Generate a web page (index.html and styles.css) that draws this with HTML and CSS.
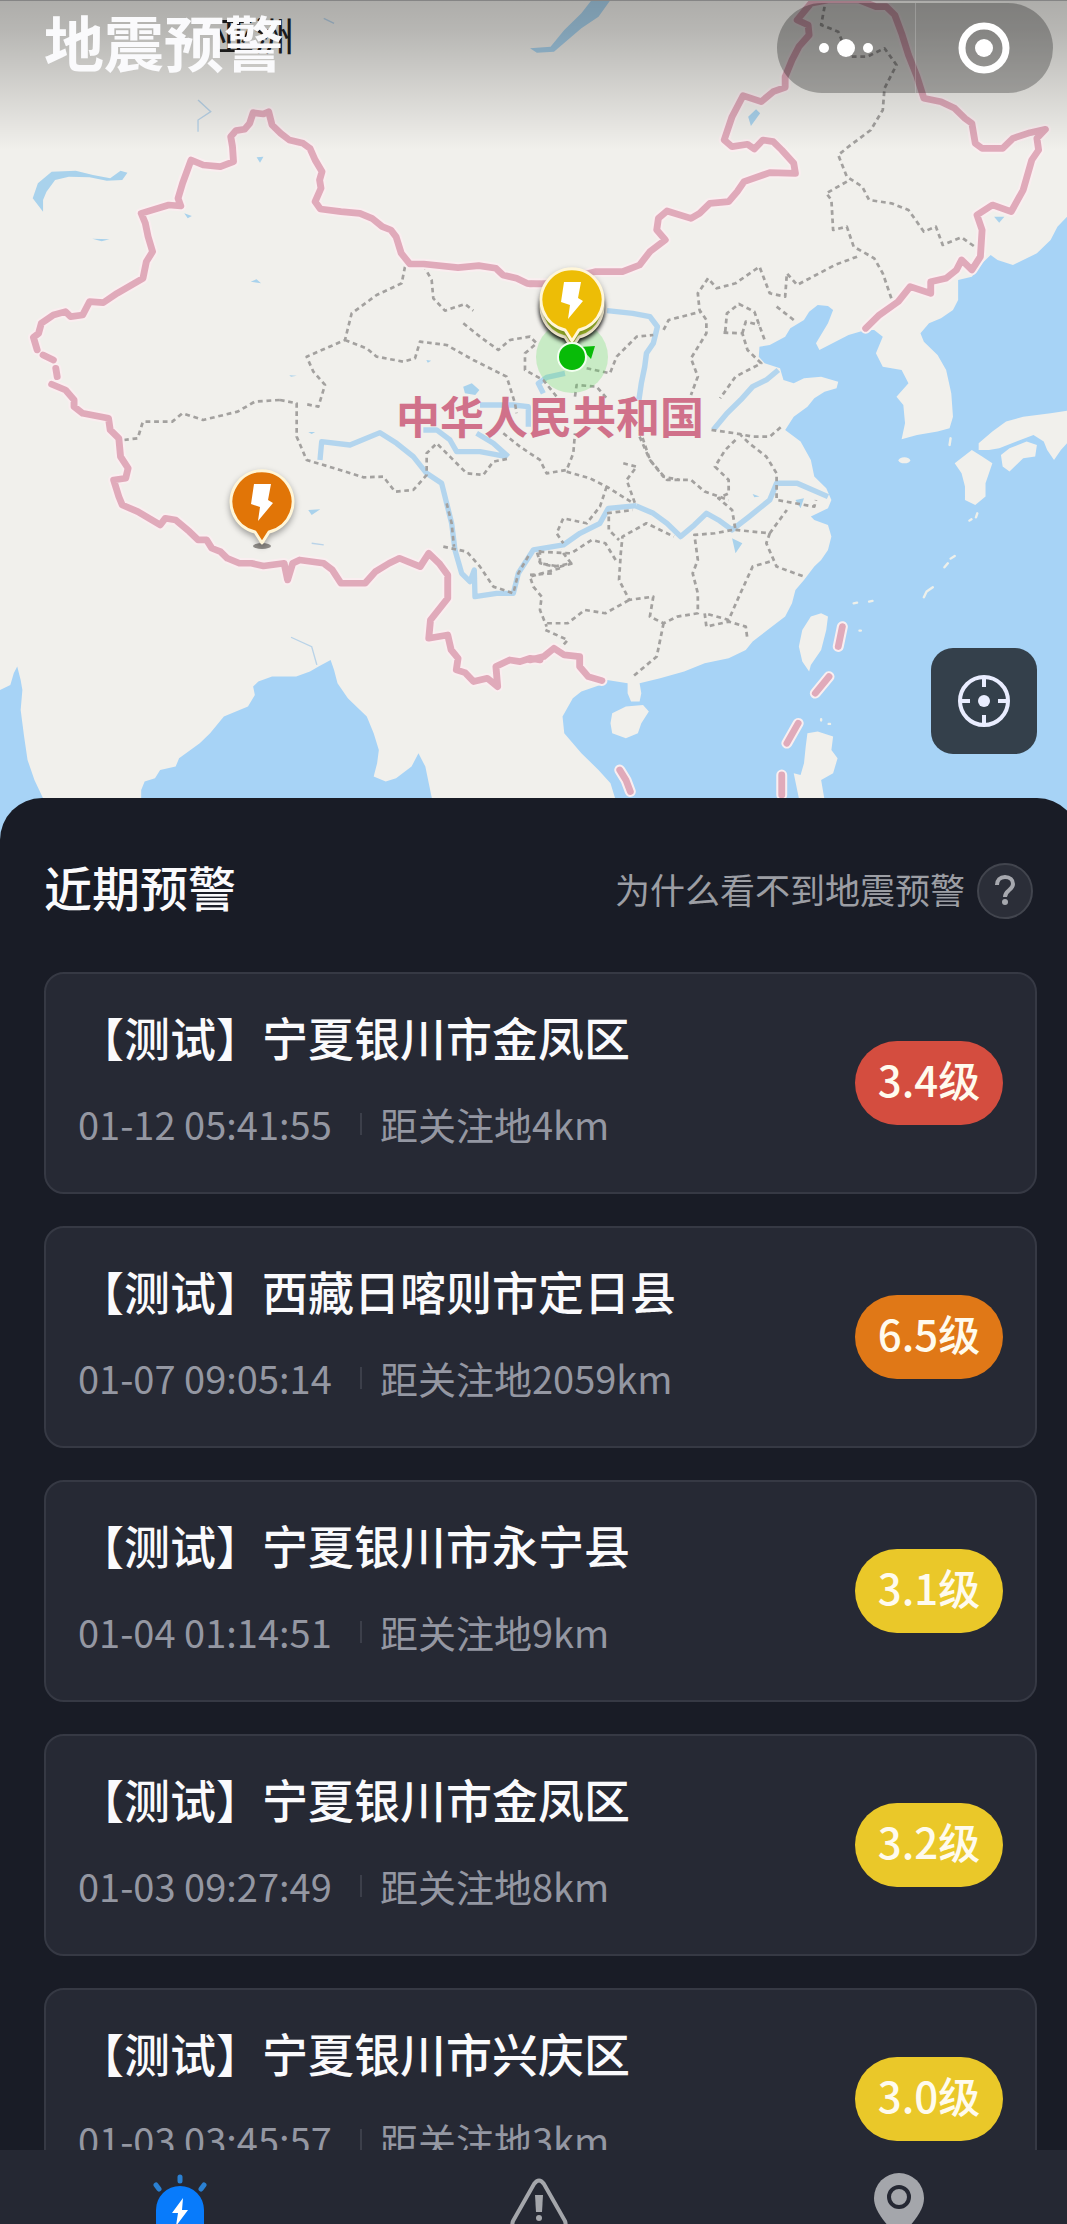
FILE: index.html
```
<!DOCTYPE html>
<html lang="zh-CN">
<head>
<meta charset="utf-8">
<meta name="viewport" content="width=device-width, initial-scale=1">
<title>地震预警</title>
<link rel="stylesheet" href="styles.css">
</head>
<body>
<div class="app">
  <header class="map">
    <svg class="map-canvas" viewBox="0 0 1067 840" preserveAspectRatio="xMidYMin slice" aria-hidden="true">
      <defs>
        <g id="border">
          <g transform="matrix(.3444 0 0 .3333 0 0)">
            <path d="M1568 852 1530 850 1500 835 1460 825 1440 805 1390 797 1330 803 1230 792 1190 792 1165 760 1150 710 1135 690 1110 680 1080 655 1045 640 990 635 930 627 915 605 932 565 928 540 935 515 915 480 900 445 880 430 840 420 815 400 790 375 780 335 765 342 735 338 725 370 710 388 685 392 670 410 675 440 678 485 640 500 590 495 555 480 530 550 517 595 525 618 490 615 410 640 422 670 430 710 443 755 425 785 415 835 390 850 340 880 300 908 260 905 240 945 205 950 190 935 155 945 120 970 112 1000 97 1012 108 1050M125 1065 155 1080M162 1105 166 1130M150 1153 190 1170 215 1200 215 1220 240 1240 315 1255 320 1290 345 1315 350 1370 372 1405 365 1435 330 1440 345 1490 355 1515 400 1535 465 1575 480 1555 510 1560 550 1595 575 1620 600 1620 615 1645 640 1655 660 1675 695 1690 730 1690 765 1698 825 1690 835 1740 850 1690 870 1680 940 1690 965 1710 990 1750 1060 1750 1090 1715 1130 1690 1160 1675 1220 1700 1245 1660 1275 1690 1300 1725 1300 1795 1250 1860 1245 1915 1300 1905 1310 1950 1330 1975 1325 2010 1350 2018 1375 2045 1415 2035 1445 2060 1440 2000 1480 1980 1510 1985 1540 1975 1568 1980"/>
          </g>
          <g transform="matrix(.3425 0 0 .3333 530 0)">
            <path d="M0 852 60 850 190 815 270 815 320 795 350 755 395 720 370 690 375 655 400 633 470 655 495 640 525 610 580 605 605 575 625 545 700 518 775 520 770 490 735 450 710 425 680 420 655 447 635 433 590 440 567 420 590 350 622 287 675 305 710 275 745 262 745 230 765 180 785 140 815 105 812 75 780 60 820 10 870 0 960 0 1010 20 1040 20 1065 45 1085 100 1105 165 1130 230 1150 295 1200 305 1240 325 1270 355 1290 370 1300 430 1320 445 1380 445 1410 415 1460 398 1505 388 1480 415 1485 450 1465 480 1440 570 1405 635 1350 615 1305 645 1320 690 1315 770 1290 810 1260 780 1245 810 1215 835 1170 845 1170 880 1110 860 1075 905 1020 945 980 985M0 1980 40 1970 70 1945 100 1965 145 1970 145 2000 170 2030 210 2042M912 1880 900 1940M873 2030 833 2080M783 2170 750 2230M735 2325 735 2385M262 2310 280 2340 293 2375"/>
          </g>
        </g>
        <g id="bolt"><path d="M-8-17H9L6-1 11 2-4 20-2 6-11 3Z"/></g>
        <path id="pin" d="M0 42-7 31A31 31 0 1 1 7 31Z"/>
      </defs>

      <rect class="land" width="1067" height="840"/>

      <g class="sea" transform="matrix(.3444 0 0 .3333 0 0)">
        <path d="M410 2560V2370L420 2345 450 2335 465 2310 510 2300 520 2275 580 2230 610 2200 650 2150 720 2120 740 2085 735 2060 750 2045 790 2030 860 2030 900 2015 925 2000 960 1980 970 2010 980 2050 1010 2095 1040 2125 1065 2150 1085 2200 1100 2250 1095 2290 1085 2330 1120 2345 1150 2335 1195 2300 1215 2260 1235 2300 1245 2350 1255 2400V2560ZM0 2070 30 2055 40 2020 50 2000 60 2040 65 2070 60 2130 70 2210 80 2280 100 2340 125 2395 130 2560H0Z"/>
        <path class="lake" d="M95 595 110 550 150 515 220 512 270 525 320 535 350 512 370 518 355 540 310 542 260 532 200 530 160 540 135 575 125 600 125 635ZM745 472 765 470 755 488ZM535 640 557 648 545 655ZM268 716 318 718 295 724ZM728 845 745 838 758 850ZM1345 1160 1370 1150 1392 1170 1380 1185 1350 1180ZM895 1530 930 1528 905 1545ZM840 1126 862 1127 845 1130ZM1238 1080 1252 1082 1242 1088ZM895 1296 915 1296 905 1302Z"/>
        <path class="stream" d="M575 300 612 335 575 360 575 395M845 1912 905 1940 920 1995M905 1630 940 1635M940 55 970 70"/>
      </g>
      <g class="sea" transform="matrix(.3425 0 0 .3333 530 0)">
        <path d="M1568 650 1540 680 1520 720 1480 760 1410 795 1365 780 1345 765 1320 790 1290 830 1250 840 1250 900 1235 930 1200 955 1165 970 1140 1000 1150 1025 1190 1065 1215 1110 1230 1180 1235 1250 1225 1285 1190 1295 1130 1305 1085 1318 1095 1270 1090 1215 1070 1190 1105 1150 1085 1110 1030 1100 1010 1060 1030 1010 1005 990 980 990 930 1005 845 1050 835 1030 870 970 885 930 870 918 840 915 815 935 800 960 760 985 745 1010 700 1035 670 1040 668 1070 685 1090 730 1105 740 1140 770 1150 800 1135 850 1130 900 1145 895 1165 860 1175 830 1195 810 1220 770 1250 745 1290 790 1325 820 1380 830 1430 865 1465 880 1500 870 1525 820 1550 830 1560 870 1575 880 1610 870 1650 850 1680 830 1700 800 1740 775 1770 765 1810 745 1850 700 1885 650 1925 630 1950 580 1975 510 1990 450 2015 380 2035 320 2050 325 2080 320 2105 295 2105 285 2080 285 2050 225 2040 205 2055 150 2075 125 2095 95 2150 100 2200 150 2260 200 2310 235 2350 250 2400V2560H1568Z"/>
        <path class="lake" d="M0 145 60 140 100 90 150 40 180 0H235L200 50 150 85 110 120 70 155 20 158ZM637 350 660 328 672 340 645 378ZM1355 650 1385 650 1370 668ZM775 1500 800 1495 790 1525ZM590 1615 620 1630 600 1660ZM650 1482 670 1490 655 1492Z"/>
      </g>
      <g class="land" transform="matrix(.3425 0 0 .3333 530 0)">
        <ellipse cx="1093" cy="1381" rx="17" ry="9"/>
        <path d="M1568 1232 1520 1240 1440 1250 1390 1265 1350 1295 1310 1330 1310 1350 1340 1350 1370 1345 1420 1325 1470 1305 1500 1325 1510 1350 1530 1380 1550 1350 1568 1330ZM1375 1365 1400 1345 1450 1325 1480 1335 1475 1370 1440 1375 1400 1415 1380 1400ZM1240 1390 1290 1350 1320 1370 1350 1390 1330 1450 1330 1490 1300 1515 1270 1500 1270 1460 1260 1420ZM850 1840 870 1850 865 1890 850 1950 820 1995 815 2015 795 1985 785 1940 795 1890 820 1850ZM240 2140 280 2120 330 2115 347 2135 325 2170 315 2200 280 2215 240 2200 235 2170ZM810 2200 840 2195 885 2210 880 2250 898 2275 885 2320 850 2340 860 2400 830 2470 790 2420 770 2320 790 2325 800 2290 805 2240Z"/>
        <path class="islets" d="M945 1810 955 1808M990 1805 1000 1803M1210 1702 1220 1690M1228 1676 1240 1668M1150 1792 1158 1775 1176 1762M1283 1562 1289 1558M1302 1552 1306 1540M1225 1335 1228 1315M962 1892H966M850 2158V2162M872 2172H876"/>
      </g>

      <g class="river" transform="matrix(.3425 0 0 .3333 530 0)">
        <path d="M225 932 300 940 350 950 372 980 360 1030 340 1060 335 1100 325 1150 318 1200M725 1110 690 1140 650 1160 615 1200 575 1240 535 1290"/>
        <path d="M310 1518 360 1540 400 1570 440 1610 480 1575 515 1540 550 1560 590 1590 640 1550 700 1500 720 1450 780 1450 870 1490"/>
      </g>
      <g class="river" transform="matrix(.3333 0 0 .3333 280 240)">
        <path d="M120 660 125 605 210 615 300 578 350 610 400 650 440 700 485 730 500 790 515 850 525 930 545 1000 570 1025 583 990 585 1070 650 1060 700 1060 715 1000 760 930 850 915 900 880 960 850 985 805 1070 797"/>
        <path d="M430 570H470L510 600 530 635 600 635 680 650M590 580 640 610 685 650M600 495H700L745 500 745 560M790 460 775 430 800 412 855 400"/>
      </g>

      <g class="province" transform="matrix(.3444 0 0 .3333 0 0)">
        <path d="M360 1320 400 1315 415 1265 500 1265 530 1240 590 1260 690 1235 740 1205 813 1200"/>
      </g>
      <g class="province" transform="matrix(.3333 0 0 .3333 280 240)">
        <path d="M375 80 365 130 290 165 215 220 195 300 80 350 100 395 135 435 115 500 75 492M195 300 260 325 290 350 370 365 405 355 420 305 500 315 580 360 680 410 705 490 710 520M430 75 455 120 460 175 495 212 555 192 580 212M550 250 600 290 655 330 690 300 750 290 770 310 735 340 735 390 790 420 830 470"/>
        <path d="M0 480 50 490 50 590 80 660 180 690 250 712 310 710 345 755 400 750 440 705 440 640 470 610 510 650 560 700 610 705 640 665 690 655M670 580 720 620 780 660 800 700 860 690 880 640 885 580M885 470 890 435 950 440 985 480M920 385 990 400 1010 350 1070 290 1120 285"/>
        <path d="M860 695 930 715 980 740 1060 790M980 740 960 800 920 850 850 835 830 880 850 910M1030 670 1070 680 1040 720 1065 790M1080 570 1110 660 1150 710 1200 720M490 920 560 935 600 980 640 1040 700 1060 715 1000 750 940M500 790 515 850 522 920M780 930 780 970 840 980 880 970M840 985 750 1010 760 1040 785 1070 780 1110 800 1160"/>
      </g>
      <g class="province" transform="matrix(.3425 0 0 .3333 530 0)">
        <path d="M860 20 850 75 900 95 930 170 985 170 1035 145 1070 195 1035 265 1030 330 995 390 930 440 900 465 925 530 970 560 990 600 1055 610 1105 630 1150 695 1185 680 1205 735 1260 712 1305 745M925 545 865 580 880 600 885 690 925 680 945 740 1005 775 1030 820 1055 895M955 770 890 795 780 855 750 820 745 890 700 880 670 800 600 850 545 865 520 835 490 880 495 930 515 960 515 1000 470 1075 490 1130 470 1185"/>
        <path d="M770 960 720 920M570 995 575 940 610 912 655 935 685 1020M565 998 620 1000 635 1050 675 1090 600 1130 555 1195M620 1000 630 965 670 975M390 990 405 960 500 935M530 1290 600 1300 650 1310 700 1310 740 1275M600 1320 570 1350 540 1400 580 1440 580 1480 550 1495 590 1530 600 1590M610 1300 640 1330 690 1370 720 1420 720 1500 830 1520 835 1500M350 1380 400 1440 470 1440 510 1475 580 1500"/>
        <path d="M600 1590 700 1600 750 1530M700 1600 690 1630 720 1700 800 1730M700 1685 650 1700 610 1790 580 1860 510 1840 515 1880 580 1865 630 1880 635 1920M590 1590 540 1600 480 1605 490 1680 475 1720 490 1780 490 1840 430 1850 390 1870 350 1850 360 1790 290 1800 260 1740 265 1660 270 1610 340 1570 420 1610M230 1550 230 1590 260 1620M225 1540 300 1530M250 1680 220 1630 180 1620 120 1660 20 1655 30 1690 70 1700 120 1690 90 1650M45 1890 110 1920 85 1950M50 1870 110 1870 160 1830 220 1840 290 1800M390 1870 370 1970 300 2030M0 1725 70 1720M320 1310 350 1380"/>
      </g>

      <use class="border-halo" href="#border"/>
      <use class="border-line" href="#border"/>

      <text class="continent" x="214" y="51">亚洲</text>
      <text class="country" x="396" y="434">中华人民共和国</text>

      <g transform="translate(262 501)">
        <ellipse class="pin-foot" cy="45" rx="9" ry="3"/>
        <use class="pin pin-orange" href="#pin"/>
        <use class="bolt" href="#bolt"/>
      </g>
      <circle class="here-range" cx="572" cy="357" r="36"/>
      <g transform="translate(572 306)">
        <use class="pin pin-under" href="#pin"/>
      </g>
      <g transform="translate(572 299)">
        <use class="pin pin-yellow" href="#pin"/>
        <use class="bolt" href="#bolt"/>
      </g>
      <path class="here" d="M580 347 595 346 591 359Z"/>
      <circle class="here here-dot" cx="572" cy="357" r="14"/>
    </svg>

    <div class="topbar">
      <h1 class="app-title">地震预警</h1>
      <div class="capsule">
        <button class="capsule-btn" type="button" aria-label="更多">
          <svg width="54" height="20" viewBox="0 0 54 20"><g fill="#fff"><circle cx="5" cy="10" r="5"/><circle cx="27" cy="10" r="9"/><circle cx="49" cy="10" r="5"/></g></svg>
        </button>
        <button class="capsule-btn" type="button" aria-label="关闭">
          <svg width="52" height="52" viewBox="0 0 52 52"><circle cx="26" cy="26" r="22" fill="none" stroke="#fff" stroke-width="7"/><circle cx="26" cy="26" r="9" fill="#fff"/></svg>
        </button>
      </div>
    </div>

    <button class="locate" type="button" aria-label="定位">
      <svg width="54" height="54" viewBox="0 0 54 54"><g fill="none" stroke="#e9edff" stroke-width="4"><circle cx="27" cy="27" r="24"/><path d="M27 3v10M27 41v10M3 27h10M41 27h10"/></g><circle cx="27" cy="27" r="6" fill="#e9edff"/></svg>
    </button>
  </header>

  <main class="panel">
    <div class="panel-head">
      <h2 class="panel-title">近期预警</h2>
      <a class="help" href="#help">
        <span class="help-text">为什么看不到地震预警</span>
        <svg class="help-icon" width="56" height="56" viewBox="0 0 56 56" aria-hidden="true"><circle cx="28" cy="28" r="27" fill="#2b2e38" stroke="#42454e" stroke-width="2"/><path d="M20 22c0-5 3-8 8-8s8 3 8 7c0 6-8 6-8 13" fill="none" stroke="#a6a8ae" stroke-width="4"/><circle cx="28" cy="39" r="3" fill="#a6a8ae"/></svg>
      </a>
    </div>
    <ul class="alerts">
      <li class="alert">
        <div class="alert-text">
          <h3 class="alert-place">【测试】宁夏银川市金凤区</h3>
          <p class="alert-meta"><time class="alert-time">01-12 05:41:55</time><span class="alert-distance">距关注地4km</span></p>
        </div>
        <span class="level level-red">3.4级</span>
      </li>
      <li class="alert">
        <div class="alert-text">
          <h3 class="alert-place">【测试】西藏日喀则市定日县</h3>
          <p class="alert-meta"><time class="alert-time">01-07 09:05:14</time><span class="alert-distance">距关注地2059km</span></p>
        </div>
        <span class="level level-orange">6.5级</span>
      </li>
      <li class="alert">
        <div class="alert-text">
          <h3 class="alert-place">【测试】宁夏银川市永宁县</h3>
          <p class="alert-meta"><time class="alert-time">01-04 01:14:51</time><span class="alert-distance">距关注地9km</span></p>
        </div>
        <span class="level level-yellow">3.1级</span>
      </li>
      <li class="alert">
        <div class="alert-text">
          <h3 class="alert-place">【测试】宁夏银川市金凤区</h3>
          <p class="alert-meta"><time class="alert-time">01-03 09:27:49</time><span class="alert-distance">距关注地8km</span></p>
        </div>
        <span class="level level-yellow">3.2级</span>
      </li>
      <li class="alert">
        <div class="alert-text">
          <h3 class="alert-place">【测试】宁夏银川市兴庆区</h3>
          <p class="alert-meta"><time class="alert-time">01-03 03:45:57</time><span class="alert-distance">距关注地3km</span></p>
        </div>
        <span class="level level-yellow">3.0级</span>
      </li>
    </ul>
  </main>

  <nav class="tabs">
    <a class="tab" href="#alerts" aria-label="预警">
      <svg width="60" height="60" viewBox="0 0 60 60"><path d="M6 60V40a24 24 0 0 1 48 0v20Z" fill="#087bfb"/><path d="M30 7v4M6 15l3 4M54 15l-3 4" stroke="#2a80d2" stroke-width="5" stroke-linecap="round"/><path d="M33 28 22 43h6l-2 13 12-16h-6Z" fill="#fff"/></svg>
    </a>
    <a class="tab" href="#notices" aria-label="通知">
      <svg width="60" height="60" viewBox="0 0 60 60"><path d="M25 14q5-7 10 0L56 51q2 6-2 10H6q-4-4-2-10Z" fill="none" stroke="#a4a6ab" stroke-width="4"/><path d="M26 25h8l-1 17h-6Z" fill="#a4a6ab"/><circle cx="30" cy="48" r="3" fill="#a4a6ab"/></svg>
    </a>
    <a class="tab" href="#places" aria-label="关注地">
      <svg width="60" height="60" viewBox="0 0 60 60"><path d="M30 3a25 25 0 0 1 25 25c0 10-6 20-25 40C11 48 5 38 5 28A25 25 0 0 1 30 3Z" fill="#a4a6ab"/><circle cx="30" cy="27" r="10" fill="none" stroke="#252833" stroke-width="4"/></svg>
    </a>
  </nav>
</div>
</body>
</html>
```
FILE: styles.css
```
* {
  box-sizing: border-box;
}

body {
  margin: 0;
  background: #191c26;
  color: #fafafc;
  font-family: "Noto Sans CJK SC", sans-serif;
}

h1, h2, h3, p, ul {
  margin: 0;
  padding: 0;
}

button {
  border: 0;
  padding: 0;
  background: none;
}

svg {
  display: block;
}

.app {
  display: flex;
  flex-direction: column;
  height: 100vh;
  overflow: hidden;
}

/* Map */

.map {
  position: relative;
  flex: none;
}

.map-canvas {
  width: 100%;
  height: auto;
}

.land {
  fill: #f1f0ec;
}

.sea {
  fill: #a7d3f6;
}

.lake {
  fill: #a9d2ec;
}

.stream {
  fill: none;
  stroke: #b9d3e8;
  stroke-width: 4;
}

.islets {
  fill: none;
  stroke: #eef0ea;
  stroke-width: 7;
  stroke-linecap: round;
}

.river {
  fill: none;
  stroke: #b3d5ee;
  stroke-width: 16;
  stroke-linejoin: round;
}

.province {
  fill: none;
  stroke: #a3a19f;
  stroke-width: 8;
  stroke-dasharray: 14 11;
  stroke-linejoin: round;
}

.border-halo,
.border-line {
  fill: none;
  stroke-linecap: round;
  stroke-linejoin: round;
}

.border-halo {
  stroke: #faeef0;
  stroke-width: 32;
}

.border-line {
  stroke: #e0aaba;
  stroke-width: 20;
}

.continent {
  fill: #222;
  font-size: 40px;
}

.country {
  fill: #d0718a;
  font-size: 44px;
  font-weight: 700;
}

.pin {
  stroke: #fff6d8;
  stroke-width: 3;
  stroke-linejoin: round;
  filter: drop-shadow(0 3px 3px rgba(0, 0, 0, .35));
}

.pin-orange {
  fill: #e17507;
}

.pin-yellow {
  fill: #edbd06;
}

.pin-under {
  fill: #a9c62c;
  filter: drop-shadow(0 3px 2px rgba(0, 0, 0, .9));
}

.pin-foot {
  fill: #8f8c88;
}

.bolt {
  fill: #fff;
}

.here {
  fill: #08bb08;
}

.here-dot {
  stroke: #f2fff0;
  stroke-width: 2;
}

.here-range {
  fill: rgba(80, 220, 80, .25);
}

.topbar {
  position: absolute;
  inset: 0 0 auto;
  display: flex;
  align-items: flex-start;
  justify-content: space-between;
  height: 150px;
  padding: 2px 14px 0 44px;
  border-top: 1px solid #858585;
  background: linear-gradient(rgba(0, 0, 0, .28), rgba(0, 0, 0, .24) 20%, rgba(0, 0, 0, 0));
}

.app-title {
  font-size: 60px;
  font-weight: 700;
  line-height: 76px;
}

.capsule {
  display: flex;
  width: 276px;
  height: 90px;
  border-radius: 45px;
  background: rgba(0, 0, 0, .27);
}

.capsule-btn {
  display: flex;
  flex: 1;
  align-items: center;
  justify-content: center;
}

.capsule-btn + .capsule-btn {
  border-left: 1px solid rgba(255, 255, 255, .2);
}

.locate {
  position: absolute;
  right: 30px;
  bottom: 86px;
  display: flex;
  align-items: center;
  justify-content: center;
  width: 106px;
  height: 106px;
  border-radius: 22px;
  background: #34404b;
}

/* Recent alerts: the sheet runs a little past the right edge */

.panel {
  position: relative;
  flex: 1;
  min-height: 0;
  margin: -42px -12px 0 0;
  padding: 62px 42px 0 44px;
  border-radius: 42px 42px 0 0;
  background: #191c26;
  overflow: hidden;
}

.panel-head {
  display: flex;
  align-items: center;
  justify-content: space-between;
  height: 62px;
  margin-bottom: 50px;
  padding-right: 4px;
}

.panel-title {
  padding-bottom: 10px;
  font-size: 48px;
  font-weight: 500;
}

.help {
  display: flex;
  align-items: center;
  gap: 12px;
  color: #9c9ea4;
  font-size: 35px;
  text-decoration: none;
}

.help-text {
  padding-bottom: 6px;
}

.alerts {
  display: flex;
  flex-direction: column;
  gap: 32px;
  list-style: none;
}

.alert {
  display: flex;
  align-items: center;
  justify-content: space-between;
  height: 222px;
  padding: 0 32px;
  border: 2px solid #363944;
  border-radius: 20px;
  background: #262934;
}

.alert-text {
  display: grid;
  gap: 32px;
  padding-bottom: 14px;
}

.alert-place {
  font-size: 46px;
  font-weight: 500;
  line-height: 64px;
}

.alert-meta {
  display: flex;
  align-items: center;
  color: #9497a2;
  font-size: 38px;
  line-height: 48px;
}

.alert-time {
  min-width: 260px;
}

.alert-distance {
  display: flex;
  align-items: center;
}

.alert-distance::before {
  width: 2px;
  height: 22px;
  margin: 0 18px 0 22px;
  background: #3c3f4a;
  content: "";
}

.level {
  width: 148px;
  padding-bottom: 8px;
  border-radius: 42px;
  color: #fffbee;
  font-size: 42px;
  font-weight: 500;
  line-height: 76px;
  text-align: center;
}

.level-red {
  background: #d44d3f;
}

.level-orange {
  background: #e07817;
}

.level-yellow {
  background: #eac829;
}

/* Tab bar */

.tabs {
  position: relative;
  display: grid;
  flex: none;
  grid-template-columns: repeat(3, 1fr);
  height: 74px;
  margin-right: -12px;
  padding-top: 20px;
  background: #252833;
  overflow: hidden;
}

.tab {
  display: flex;
  justify-content: center;
}
```
